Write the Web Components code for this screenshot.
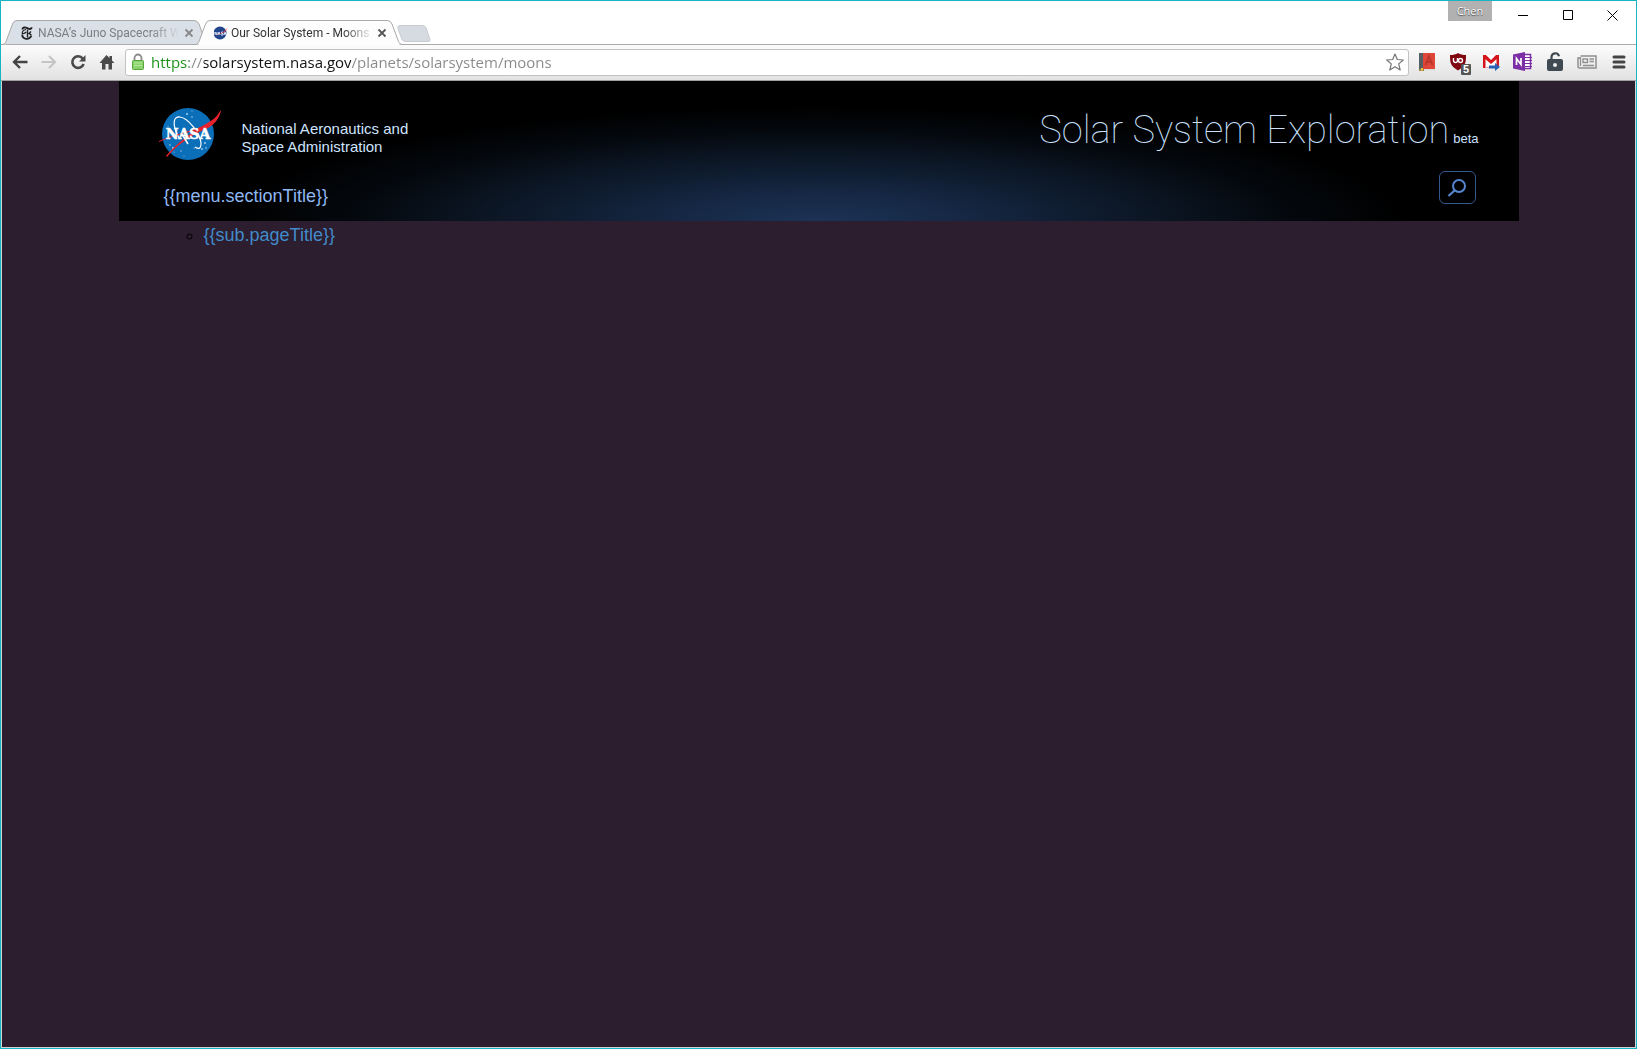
<!DOCTYPE html>
<html lang="en">
<head>
<meta charset="utf-8">
<title>Our Solar System - Moons</title>
<style>
  body { margin: 0; font-family: "Open Sans", "Noto Sans", sans-serif; }
</style>
</head>
<body>
<browser-window>
  <tab-strip slot="tabs">
    <browser-tab label="NASA’s Juno Spacecraft W">
      <svg slot="icon" width="16" height="16" viewBox="0 0 16 16" aria-hidden="true"><g fill="none" stroke="#222"><path d="M1.500 4.500c0-2 2-2.500 3.500-1.800l3 1.200c1.500.4 2.500-.2 2.500-1.700" stroke-width="2"/><path d="M5 4.500C1.500 5.500 1 7 1.300 8.500c2 .5 3-.5 4-1.500" stroke-width="1.200"/><path d="M1.200 9.500c0 5 7 6 9.300 1.200" stroke-width="1.800"/><path d="M6.500 4.500v8M10 6.500L8 8.500l2.500 1.500" stroke-width="1.400"/></g></svg>
    </browser-tab>
    <browser-tab label="Our Solar System - Moons" active>
      <svg slot="icon" width="16" height="16" viewBox="0 0 16 16" aria-hidden="true"><circle cx="6" cy="8" r="6.500" fill="#21468b"/><path d="M1 10V7l2 3V7M4 10l1-3 1 3M9 7H7.500v1.500H9V10H7M10 10l1-3 1 3" fill="none" stroke="#dfe6f3"/><path d="M1 11L10 6.500 14 2.500 11 7z" fill="#d8404a"/></svg>
    </browser-tab>
  </tab-strip>
  <nav-toolbar slot="toolbar"></nav-toolbar>
  <site-banner></site-banner>
  <site-submenu></site-submenu>
</browser-window>

<script>
const define = (name, html, setup) => {
  const tpl = document.createElement('template');
  tpl.innerHTML = html;
  customElements.define(name, class extends HTMLElement {
    constructor() {
      super();
      this.attachShadow({ mode: 'open' }).append(tpl.content.cloneNode(true));
    }
    connectedCallback() { if (setup) setup(this, this.shadowRoot); }
  });
};

define('browser-window', `
<style>
  :host { display: flex; flex-direction: column; box-sizing: border-box; min-height: 100vh; border: 1px solid #17b5c1; background: #fff; }
  .frame { display: flex; align-items: flex-end; justify-content: space-between; height: 44px; border-bottom: 1px solid #aaa; box-sizing: border-box; }
  ::slotted(tab-strip) { margin-bottom: -1px; }
  main { flex: 1; background: #2c1d2f; border: 1px solid #d3d3d3; border-top: 0; }
</style>
<div class="frame"><slot name="tabs"></slot><window-controls></window-controls></div>
<slot name="toolbar"></slot>
<main><slot></slot></main>`);

define('window-controls', `
<style>
  :host { display: flex; align-self: flex-start; padding-right: 1px; }
  button { border: 0; padding: 0; background: none; font: inherit; }
  .user { width: 44px; height: 20px; margin-right: 8px; background: #b1b1b1; color: #fff; font-size: 11px; line-height: 20px; text-shadow: 0 1px 1px #555, 0 0 1px #777; }
  .win { width: 45px; height: 28px; }
  svg { display: block; margin: auto; }
</style>
<button class="user">Chen</button>
<button class="win" aria-label="Minimize"><svg width="10" height="10"><path d="M0 5.500h10" stroke="#000"/></svg></button>
<button class="win" aria-label="Maximize"><svg width="10" height="10"><path d="M.5.500h9v9h-9z" fill="none" stroke="#000"/></svg></button>
<button class="win" aria-label="Close"><svg width="11" height="11"><path d="M.5.500l10 10M10.500.500l-10 10" stroke="#000"/></svg></button>`);

define('tab-strip', `
<style>
  :host { display: flex; padding-left: 2px; }
  button { border: 0; padding: 4px 0 0; margin-left: 8px; height: 24px; background: none; }
  svg { display: block; }
</style>
<slot></slot>
<button aria-label="New tab"><svg width="34" height="18" viewBox="0 0 34 18"><path d="M3 .5h22q3 0 4 2l4 12q.5 2-2 2H9q-3 0-4-2L.8 3Q.3.500 3 .500z" fill="#d6dbe2" stroke="#c8ccd2"/></svg></button>`);

define('browser-tab', `
<style>
  :host { display: flex; position: relative; isolation: isolate; align-items: center; box-sizing: border-box; width: 207px; height: 25px; margin-right: -14px; padding: 0 16px 0 18px; color: #7a7d82; --fill: #dae0e7; --base: #aaa; --cross: #888; }
  :host([active]) { z-index: 1; color: #333; --fill: #fdfdfd; --base: #fdfdfd; --cross: #555; }
  .shape { position: absolute; inset: 0; z-index: -1; }
  .title { flex: 1; min-width: 0; margin: 0 6px 0 1px; padding: 0; border: 0; background: none; color: inherit; font: 12px/24px Roboto, sans-serif; text-align: left; white-space: nowrap; -webkit-mask-image: linear-gradient(90deg, #000 112px, transparent 142px); mask-image: linear-gradient(90deg, #000 112px, transparent 142px); }
  .close { border: 0; padding: 0; width: 10px; height: 10px; background: none; color: var(--cross); }
  .close svg { display: block; }
  ::slotted(svg) { flex: none; }
</style>
<svg class="shape" width="207" height="25" viewBox="0 0 207 25"><path d="M0 24.500Q2 24 3 21.500L9.500 4Q10.500.500 14 .500H191Q194.500.500 196 4L202.500 21.500Q203.500 24 206 24.500" fill="var(--fill)" stroke="#a9a9a9"/><path d="M3 24.500H203" stroke="var(--base)"/></svg>
<slot name="icon"></slot>
<button class="title"></button>
<button class="close" aria-label="Close tab"><svg width="10" height="10"><path d="M1.500 1.500l7 7M8.500 1.500l-7 7" stroke="currentColor" stroke-width="1.800"/></svg></button>`,
(el, root) => {
  root.querySelector('.title').textContent = el.getAttribute('label');
});

define('nav-toolbar', `
<style>
  :host { display: flex; align-items: center; box-sizing: border-box; height: 36px; padding: 0 1px 1px 4px; background: linear-gradient(#fcfcfc, #e2e2e2); border-bottom: 1px solid #a0a0a0; }
  button { border: 0; padding: 0; background: none; flex: none; height: 28px; }
  svg { display: block; margin: auto; }
  .nav { width: 29px; }
  .ext { width: 32px; }
  .omni { flex: 1; display: flex; align-items: center; box-sizing: border-box; height: 27px; margin: 0 2px 0 4px; padding: 0 4px 0 5px; border: 1px solid #c3c3c3; border-radius: 3px; background: #fff; }
  .omni svg { flex: none; margin: 0; }
  input { flex: 1; min-width: 0; height: 24px; margin-left: 6px; padding: 0; border: 0; outline: 0; font: 15px/24px "Open Sans", sans-serif; color: transparent; background: linear-gradient(90deg, #159015 38px, #888 38px 53px, #111 53px 200px, #888 200px); -webkit-background-clip: text; background-clip: text; }
</style>
<button class="nav" aria-label="Back"><svg width="16" height="14"><path d="M15.500 7H2M8 1L2 7l6 6" fill="none" stroke="#444" stroke-width="2.400"/></svg></button>
<button class="nav" aria-label="Forward"><svg width="16" height="14"><path d="M.5 7H14M8 1l6 6-6 6" fill="none" stroke="#c5c5c5" stroke-width="2.200"/></svg></button>
<button class="nav" aria-label="Reload"><svg width="16" height="16"><path d="M12.700 4.500A5.800 5.800 0 1 0 13.600 10" fill="none" stroke="#4a4a4a" stroke-width="2.600"/><path d="M15.500 1v6.500H9z" fill="#4a4a4a"/></svg></button>
<button class="nav" aria-label="Home"><svg width="16" height="16"><path d="M7.500 1l3 3V2h2.500v4.500l2.500 2.500H13v6.500H9.500V10h-3v5.500H3V9H.5z" fill="#4a4a4a"/></svg></button>
<div class="omni">
  <svg width="14" height="18"><path d="M3.500 8V5a3.500 3.500 0 0 1 7 0v3" fill="none" stroke="#8b8b8b" stroke-width="1.800"/><rect x="1.500" y="7.500" width="11" height="9" rx="1" fill="#8bd36c" stroke="#55a53c"/><path d="M3 10h8M3 12.500h8" stroke="#b4e89c"/></svg>
  <input type="text" aria-label="Address" value="https://solarsystem.nasa.gov/planets/solarsystem/moons">
  <button aria-label="Bookmark this page"><svg width="18" height="28" viewBox="0 -5 18 28"><path d="M9 1l2.300 5.500 6 .500-4.600 3.900L14.200 17 9 13.700 3.800 17l1.500-6.100L.7 7l6-.500z" fill="#fff" stroke="#777" stroke-width="1.200" stroke-linejoin="round"/></svg></button>
</div>
<button class="ext" aria-label="Dictionary"><svg width="16" height="20" viewBox="0 0 16 20"><path d="M0 1h4v18H0z" fill="#555f63"/><path d="M4 1h12v16H4z" fill="#df4538"/><path d="M4 17h12v1.500H4z" fill="#ddd"/><path d="M0 17h5v2H0z" fill="#9c8544"/><path d="M2 16h2v3l-1-1-1 1z" fill="#f3c63d"/><path d="M6.500 13L10 4l3.500 9M8 10h4" fill="none" stroke="#b9362b" stroke-width="1.800"/></svg></button>
<button class="ext" aria-label="uBlock, 5 blocked"><svg width="24" height="28" viewBox="0 -1 24 28"><path d="M11 4c2 1.500 5 2 8 2 0 8-.5 11-8 15.500C3.500 17 3 14 3 6c3 0 6-.500 8-2z" fill="#800610"/><path d="M6.500 9v2.500q0 2 2 2t2-2V9" fill="none" stroke="#fff" stroke-width="1.400"/><circle cx="13.500" cy="11.500" r="2" fill="none" stroke="#fff" stroke-width="1.400"/><rect x="14" y="15" width="10" height="11" rx="1" fill="#555"/><text x="19" y="24" text-anchor="middle" font-family="Liberation Sans" font-weight="bold" font-size="11" fill="#fff">5</text></svg></button>
<button class="ext" aria-label="Gmail"><svg width="18" height="18" viewBox="0 0 18 18"><path d="M1 2h16v13H1z" fill="#fff"/><path d="M1 2h2.500v13H1zM14.500 2H17v11h-2.500zM1 2h3l5 5 5-5h3v2L9 11 1 4z" fill="#d5151c"/><path d="M3 14.500h5" stroke="#e8a0a0"/><path d="M7 12.500h6V10l5 4-5 4v-2.500H7z" fill="#2b5fb4"/></svg></button>
<button class="ext" aria-label="OneNote"><svg width="20" height="20" viewBox="0 0 20 20"><path d="M10 2.500h7.500v14H10" fill="#fff" stroke="#7c2fa5" stroke-width="1.500"/><path d="M12 5.500h7M12 8.500h7M12 11.500h7M12 14.500h7" stroke="#7c2fa5"/><path d="M0 2.500L12 0v19L0 16.500z" fill="#7c2fa5"/><path d="M3.500 13V6.500L8 12.500V6" fill="none" stroke="#fff" stroke-width="1.700"/></svg></button>
<button class="ext" aria-label="Unlocked"><svg width="16" height="20" viewBox="0 0 16 20"><path d="M4.500 8V5a3.800 3.800 0 0 1 7.500-.8" fill="none" stroke="#3f4952" stroke-width="2.200"/><rect x="0" y="7" width="16" height="12" rx="2" fill="#3f4952"/><circle cx="8" cy="13" r="2" fill="#eee"/></svg></button>
<button class="ext" aria-label="News reader"><svg width="20" height="14" viewBox="0 0 20 14"><path d="M3.500 1h15.500v12H2.500q-1.500 0-1.500-1.500V3h2.500" fill="none" stroke="#8f8f8f" stroke-width="1.500"/><path d="M3.500 2v9M12.500 4H17M12.500 6.500H17M6 10.500h11" stroke="#8f8f8f" stroke-width="1.300"/><rect x="6" y="4" width="4.500" height="3.500" fill="none" stroke="#8f8f8f" stroke-width="1.400"/></svg></button>
<button class="ext" aria-label="Menu"><svg width="14" height="14"><path d="M2 2h10M2 7h10M2 12h10" stroke="#444" stroke-width="3" stroke-linecap="round"/></svg></button>`);

define('site-banner', `
<style>
  :host { display: flex; flex-direction: column; justify-content: space-between; box-sizing: border-box; max-width: 1400px; min-height: 140px; margin: 0 auto; padding: 24px 40px 9px 40px; background: radial-gradient(ellipse 42% 82% at 50% 100%, #1c3356 0%, #152743 25%, #0c1726 55%, #04080d 80%, #000 100%) #000; font-family: "Liberation Sans", Arial, sans-serif; }
  .row { display: flex; justify-content: space-between; }
  a { text-decoration: none; }
  .agency { display: flex; gap: 20px; color: #cfe4ff; font-size: 15px; line-height: 18px; }
  .agency svg { display: block; }
  .agency span { padding-top: 15px; }
  h1 { margin: 0; font-weight: 400; }
  h1 a { display: flex; align-items: baseline; gap: 4px; color: #cbe2ff; }
  .name { font: 100 38px/50px Roboto, sans-serif; }
  .beta { font-size: 13px; }
  .menu { align-items: flex-start; }
  .section { padding: 14px 0 0 5px; color: #8fb8f3; font-size: 18px; line-height: 22px; }
  button { display: flex; align-items: center; justify-content: center; width: 37px; height: 33px; margin: 0 3px 8px; padding: 0; border: 1px solid #34588f; border-radius: 6px; background: none; }
</style>
<div class="row">
  <a class="agency" href="#"><svg width="63" height="56" viewBox="0 0 63 56" role="img" aria-label="NASA">
    <circle cx="29" cy="29" r="26" fill="#0a6eb8"/>
    <g fill="#a9d0ee"><circle cx="28" cy="9" r="1"/><circle cx="33" cy="6" r=".6"/><circle cx="33" cy="12" r=".8"/><circle cx="20" cy="12" r=".6"/><circle cx="11" cy="40" r=".8"/><circle cx="14" cy="43" r="1"/><circle cx="15" cy="47" r=".6"/><circle cx="22" cy="46" r=".7"/><circle cx="46" cy="38" r="1"/><circle cx="43" cy="44" r=".9"/><circle cx="47" cy="43" r=".8"/><circle cx="35" cy="43" r=".6"/><circle cx="25" cy="51" r=".5"/><circle cx="9" cy="21" r=".5"/></g>
    <path d="M20 33C12 18 15 11 21 12c8 1 20 16 21 26 0 7-3 6-6 4" fill="none" stroke="#fff" stroke-width="1.200"/>
    <path d="M0 36C18 28 38 25 50 18 56 14 59 10 62 5 60 14 55 20 48 23 30 27 14 31 0 37z" fill="#e8222c"/>
    <path d="M50 17C56 14 59 10 62 5 60 14 55 20 47 24 30 31 16 42 8 52L7 51C16 40 32 27 50 17z" fill="#e8222c"/>
    <text x="29" y="34" text-anchor="middle" font-family="DejaVu Serif" font-weight="bold" font-size="14" fill="#fff" stroke="#fff" stroke-width=".5">NASA</text>
    <path d="M23 29l6 10" stroke="#fff" stroke-width="1.500"/>
  </svg><span>National Aeronautics and<br>Space Administration</span></a>
  <h1><a href="#"><span class="name">Solar System Exploration</span><span class="beta">beta</span></a></h1>
</div>
<div class="row menu">
  <a class="section" href="#">{{menu.sectionTitle}}</a>
  <button aria-label="Search"><svg width="20" height="20" viewBox="0 0 20 20"><circle cx="12" cy="8" r="6" fill="none" stroke="#5585cf" stroke-width="2"/><path d="M7.500 12.500L1.500 18" stroke="#5585cf" stroke-width="2.200"/></svg></button>
</div>`);

define('site-submenu', `
<style>
  :host { display: block; max-width: 1400px; margin: 0 auto; font: 18px/22px "Liberation Sans", Arial, sans-serif; }
  ul { margin: 0; padding: 3px 0 0 85px; list-style: circle; color: #000; }
  a { color: #428bca; text-decoration: none; }
</style>
<ul><li><a href="#">{{sub.pageTitle}}</a></li></ul>`);
</script>
</body>
</html>
